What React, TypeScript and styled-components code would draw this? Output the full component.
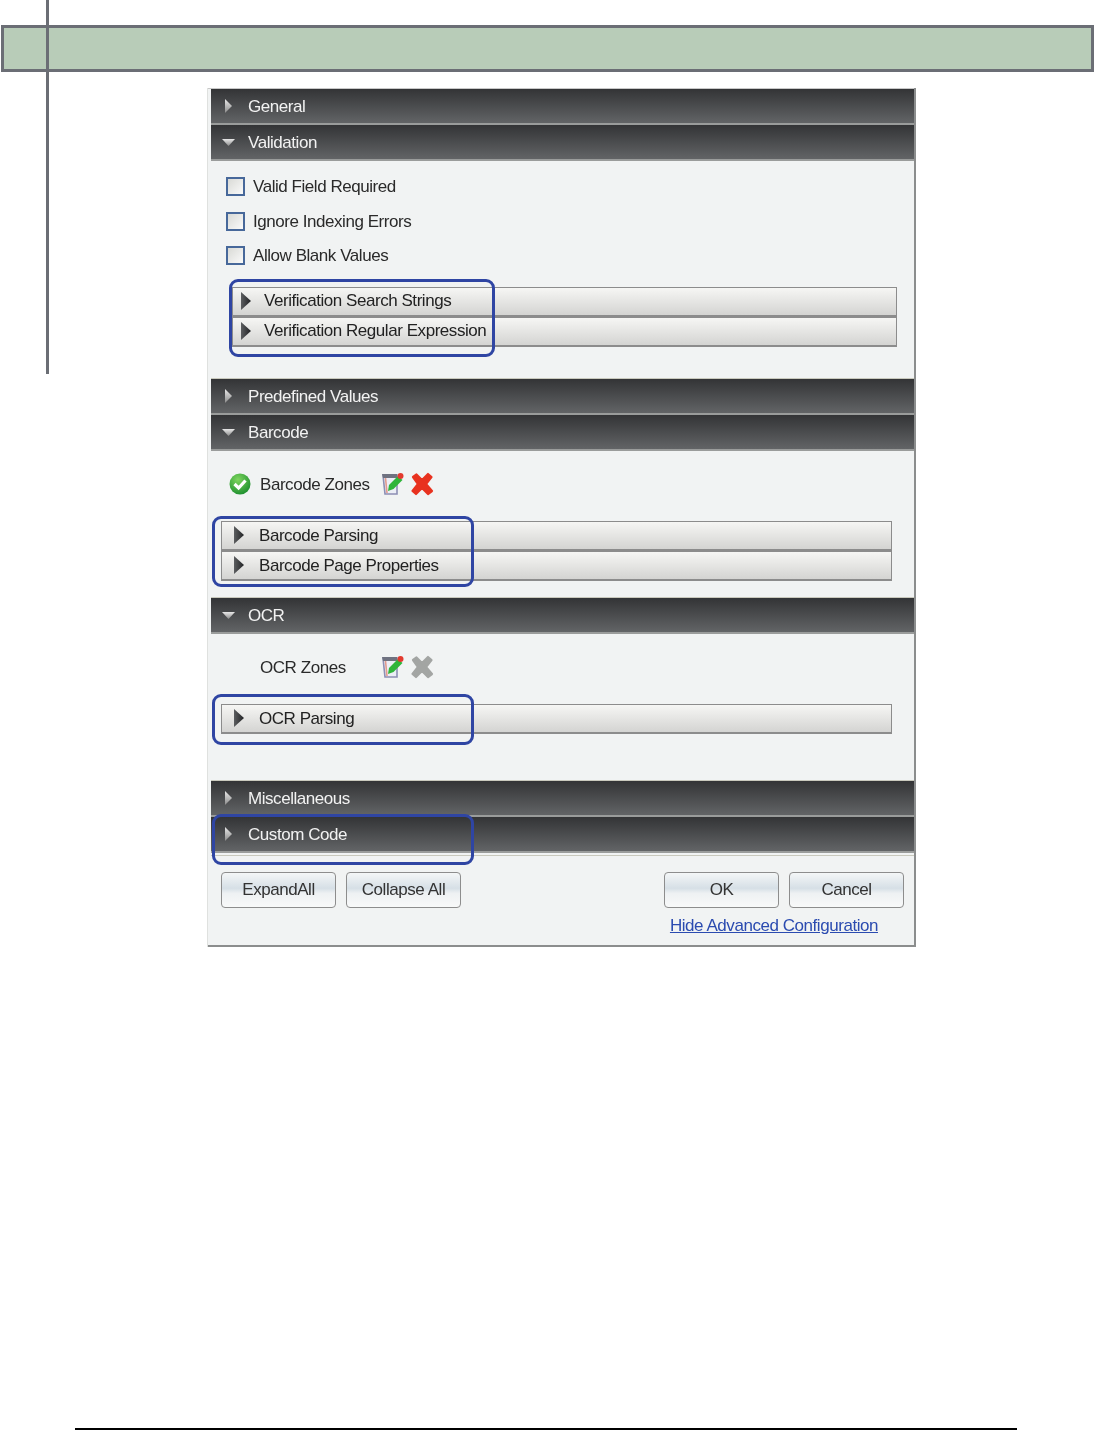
import React from 'react';
import styled, { createGlobalStyle } from 'styled-components';

const GlobalStyle = createGlobalStyle`
  html, body { margin: 0; padding: 0; background: #fff; }
  body { font-family: "Liberation Sans", Arial, sans-serif; }
`;

const Page = styled.div`
  position: relative;
  width: 1095px;
  height: 1430px;
  overflow: hidden;
  display: flex;
  flex-direction: column;
  padding-top: 25px;
  box-sizing: border-box;
  background: #fff;
`;

const Band = styled.div`
  height: 47px;
  box-sizing: border-box;
  margin: 0 1px;
  border: 3px solid #6b6e75;
  background: #b8ccb8;
  filter: blur(0.4px);
`;

const MarginLine = styled.div`
  position: absolute;
  left: 46px;
  top: 0;
  width: 3px;
  height: 374px;
  background: #6b6e75;
`;

const Panel = styled.div`
  width: 709px;
  height: 859px;
  box-sizing: border-box;
  margin: 16px 0 0 207px;
  padding: 1px 2px 2px 3px;
  background: #f1f3f3;
  border-left: 1px solid #dfe1df;
  box-shadow: inset -2px -2px 0 #8b8d8d, inset 0 1px 0 #c8c8c8;
  display: flex;
  flex-direction: column;
  filter: blur(0.5px);
`;

const HeaderBar = styled.div`
  position: relative;
  height: 36px;
  box-sizing: border-box;
  flex: none;
  display: flex;
  align-items: center;
  padding: 2px 0 0 37px;
  background: linear-gradient(#333436, #626466);
  border-bottom: 2px solid #9a9c9b;
  color: #f2f2f2;
  font-size: 17px;
  letter-spacing: -0.45px;
`;

const HeaderArrow = styled.svg`
  position: absolute;
  left: 10px;
  top: 9px;
`;

const Body = styled.div<{ $height: number; $pad: number }>`
  position: relative;
  height: ${(p) => p.$height}px;
  flex: none;
  box-sizing: border-box;
  padding-top: ${(p) => p.$pad}px;
  border-bottom: 1px solid #c9c9bd;
`;

const CheckRow = styled.div`
  height: 34.6px;
  display: flex;
  align-items: flex-start;
  padding-left: 15px;
  gap: 8px;
  color: #2a2a2a;
  font-size: 17px;
  letter-spacing: -0.45px;
`;

const CheckBox = styled.span`
  width: 19px;
  height: 19px;
  box-sizing: border-box;
  flex: none;
  border: 2px solid #47689a;
  background: linear-gradient(135deg, #d9dad6, #fafafa);
`;

const CheckLabel = styled.span`
  line-height: 19px;
`;

const SubGroup = styled.div<{ $left: number; $width: number; $top: number }>`
  position: relative;
  width: ${(p) => p.$width}px;
  margin: ${(p) => p.$top}px 0 0 ${(p) => p.$left}px;
  display: flex;
  flex-direction: column;
`;

const SubRow = styled.div<{ $indent: number }>`
  position: relative;
  height: 30px;
  box-sizing: border-box;
  display: flex;
  align-items: center;
  padding-left: ${(p) => p.$indent}px;
  border: 1px solid #8c8c8c;
  border-bottom-width: 2px;
  background: linear-gradient(#f6f6f4, #d4d4d2);
  color: #222;
  font-size: 17px;
  letter-spacing: -0.45px;
`;

const SubArrow = styled.svg<{ $left: number }>`
  position: absolute;
  left: ${(p) => p.$left}px;
  top: 3px;
`;

const Highlight = styled.div<{ $left: number; $top: number; $width: number; $height: number }>`
  position: absolute;
  left: ${(p) => p.$left}px;
  top: ${(p) => p.$top}px;
  width: ${(p) => p.$width}px;
  height: ${(p) => p.$height}px;
  box-sizing: border-box;
  border: 3px solid #2f45a3;
  border-radius: 9px;
  pointer-events: none;
`;

const ZoneRow = styled.div`
  display: flex;
  align-items: center;
  height: 26px;
  padding-left: 18px;
  color: #2a2a2a;
  font-size: 17px;
  letter-spacing: -0.45px;
`;

const ZoneStatus = styled.span`
  width: 31px;
  flex: none;
  display: flex;
  margin-bottom: 3px;
`;

const ZoneLabel = styled.span`
  width: 120px;
  flex: none;
`;

const ZoneIcons = styled.span`
  display: flex;
  align-items: center;
  gap: 6px;
  margin-bottom: 2px;
`;

const Footer = styled.div`
  flex: 1;
  display: grid;
  grid-template-columns: auto 1fr auto;
  grid-template-rows: 36px auto;
  row-gap: 8px;
  padding: 16px 10px 0 10px;
  border-top: 1px solid #c9c9bd;
  margin-top: 2px;
`;

const ButtonGroup = styled.div`
  display: flex;
  gap: 10px;
`;

const RightButtons = styled(ButtonGroup)`
  grid-column: 3;
`;

const Btn = styled.div`
  width: 115px;
  height: 36px;
  box-sizing: border-box;
  display: flex;
  align-items: center;
  justify-content: center;
  border: 1px solid #8d8d8d;
  border-radius: 4px;
  background: linear-gradient(#f4f6f7 0%, #d6dfe6 45%, #eef1f3 60%, #f8f9f9 100%);
  color: #333;
  font-size: 17px;
  letter-spacing: -0.45px;
`;

const Link = styled.a`
  grid-column: 3;
  justify-self: end;
  margin-right: 26px;
  color: #2b4bb0;
  font-size: 17px;
  letter-spacing: -0.45px;
  line-height: 19px;
  text-decoration: underline;
`;

const BottomRule = styled.div`
  height: 2px;
  margin: auto 78px 0 75px;
  background: #000;
`;

const Header = ({ title, open, children }: { title: string; open?: boolean; children?: React.ReactNode }) => (
  <HeaderBar>
    <HeaderArrow width="16" height="18" viewBox="0 0 16 18">
      <defs>
        <linearGradient id="ha" x1="0" y1="0" x2="0" y2="1">
          <stop offset="0" stopColor="#e8e8e8" />
          <stop offset="1" stopColor="#8c8c8c" />
        </linearGradient>
      </defs>
      {open ? <path d="M1 5 L14 5 L7.5 12 Z" fill="url(#ha)" /> : <path d="M4 1 L11 8 L4 15 Z" fill="url(#ha)" />}
    </HeaderArrow>
    {title}
    {children}
  </HeaderBar>
);

const Sub = ({ title, indent, arrowLeft }: { title: string; indent: number; arrowLeft: number }) => (
  <SubRow $indent={indent}>
    <SubArrow $left={arrowLeft} width="12" height="20" viewBox="0 0 12 20">
      <defs>
        <linearGradient id="sa" x1="0" y1="0" x2="1" y2="0">
          <stop offset="0" stopColor="#5c5e60" />
          <stop offset="1" stopColor="#222325" />
        </linearGradient>
      </defs>
      <path d="M1 1 L11 10 L1 19 Z" fill="url(#sa)" />
    </SubArrow>
    {title}
  </SubRow>
);

const OkIcon = () => (
  <svg width="22" height="22" viewBox="0 0 22 22">
    <defs>
      <radialGradient id="ok" cx="0.4" cy="0.3" r="0.8">
        <stop offset="0" stopColor="#7fd65e" />
        <stop offset="1" stopColor="#14882a" />
      </radialGradient>
    </defs>
    <circle cx="11" cy="11" r="10.5" fill="url(#ok)" />
    <path d="M5.5 11 L9.6 15 L16.5 7.5" fill="none" stroke="#fff" strokeWidth="3.2" />
  </svg>
);

const EditIcon = () => (
  <svg width="24" height="24" viewBox="0 0 24 24">
    <path d="M3 3 H17 V22 H5 Z" fill="#eceef6" stroke="#8d8fb4" strokeWidth="1.6" />
    <path d="M2 2 H17 V6 H3 Z" fill="#6f7280" />
    <path d="M5.5 6 L7 21" stroke="#e39a8c" strokeWidth="1.6" />
    <path d="M8 19 L9 13 L18 4 L22.5 8 L13.5 17 Z" fill="#2fb53a" />
    <circle cx="20.5" cy="4" r="3" fill="#e33a2e" />
  </svg>
);

const DeleteIcon = ({ color }: { color: string }) => (
  <svg width="24" height="24" viewBox="0 0 24 24">
    <path
      d="M3 5 L6.5 2.5 L12 8 L18 2 L21.5 5 L16 12 L22 19 L18 22 L12 16 L6 22 L2.5 19 L8 12 Z"
      fill={color}
      strokeLinejoin="round"
      stroke={color}
      strokeWidth="2.2"
    />
  </svg>
);

export default function App() {
  return (
    <Page>
      <GlobalStyle />
      <Band />
      <MarginLine />
      <Panel>
        <Header title="General" />
        <Header title="Validation" open />
        <Body $height={218} $pad={16}>
          <CheckRow><CheckBox /><CheckLabel>Valid Field Required</CheckLabel></CheckRow>
          <CheckRow><CheckBox /><CheckLabel>Ignore Indexing Errors</CheckLabel></CheckRow>
          <CheckRow><CheckBox /><CheckLabel>Allow Blank Values</CheckLabel></CheckRow>
          <SubGroup $left={21} $width={665} $top={6}>
            <Sub title="Verification Search Strings" indent={31} arrowLeft={7} />
            <Sub title="Verification Regular Expression" indent={31} arrowLeft={7} />
            <Highlight $left={-3} $top={-8} $width={266} $height={78} />
          </SubGroup>
        </Body>
        <Header title="Predefined Values" />
        <Header title="Barcode" open />
        <Body $height={147} $pad={21}>
          <ZoneRow>
            <ZoneStatus><OkIcon /></ZoneStatus>
            <ZoneLabel>Barcode Zones</ZoneLabel>
            <ZoneIcons><EditIcon /><DeleteIcon color="#e8321f" /></ZoneIcons>
          </ZoneRow>
          <SubGroup $left={10} $width={671} $top={23}>
            <Sub title="Barcode Parsing" indent={37} arrowLeft={11} />
            <Sub title="Barcode Page Properties" indent={37} arrowLeft={11} />
            <Highlight $left={-9} $top={-5} $width={262} $height={71} />
          </SubGroup>
        </Body>
        <Header title="OCR" open />
        <Body $height={147} $pad={21}>
          <ZoneRow>
            <ZoneStatus />
            <ZoneLabel>OCR Zones</ZoneLabel>
            <ZoneIcons><EditIcon /><DeleteIcon color="#a3a5a3" /></ZoneIcons>
          </ZoneRow>
          <SubGroup $left={10} $width={671} $top={23}>
            <Sub title="OCR Parsing" indent={37} arrowLeft={11} />
            <Highlight $left={-9} $top={-10} $width={262} $height={51} />
          </SubGroup>
        </Body>
        <Header title="Miscellaneous" />
        <Header title="Custom Code">
          <Highlight $left={1} $top={-3} $width={262} $height={51} />
        </Header>
        <Footer>
          <ButtonGroup>
            <Btn>ExpandAll</Btn>
            <Btn>Collapse All</Btn>
          </ButtonGroup>
          <RightButtons>
            <Btn>OK</Btn>
            <Btn>Cancel</Btn>
          </RightButtons>
          <Link>Hide Advanced Configuration</Link>
        </Footer>
      </Panel>
      <BottomRule />
    </Page>
  );
}
